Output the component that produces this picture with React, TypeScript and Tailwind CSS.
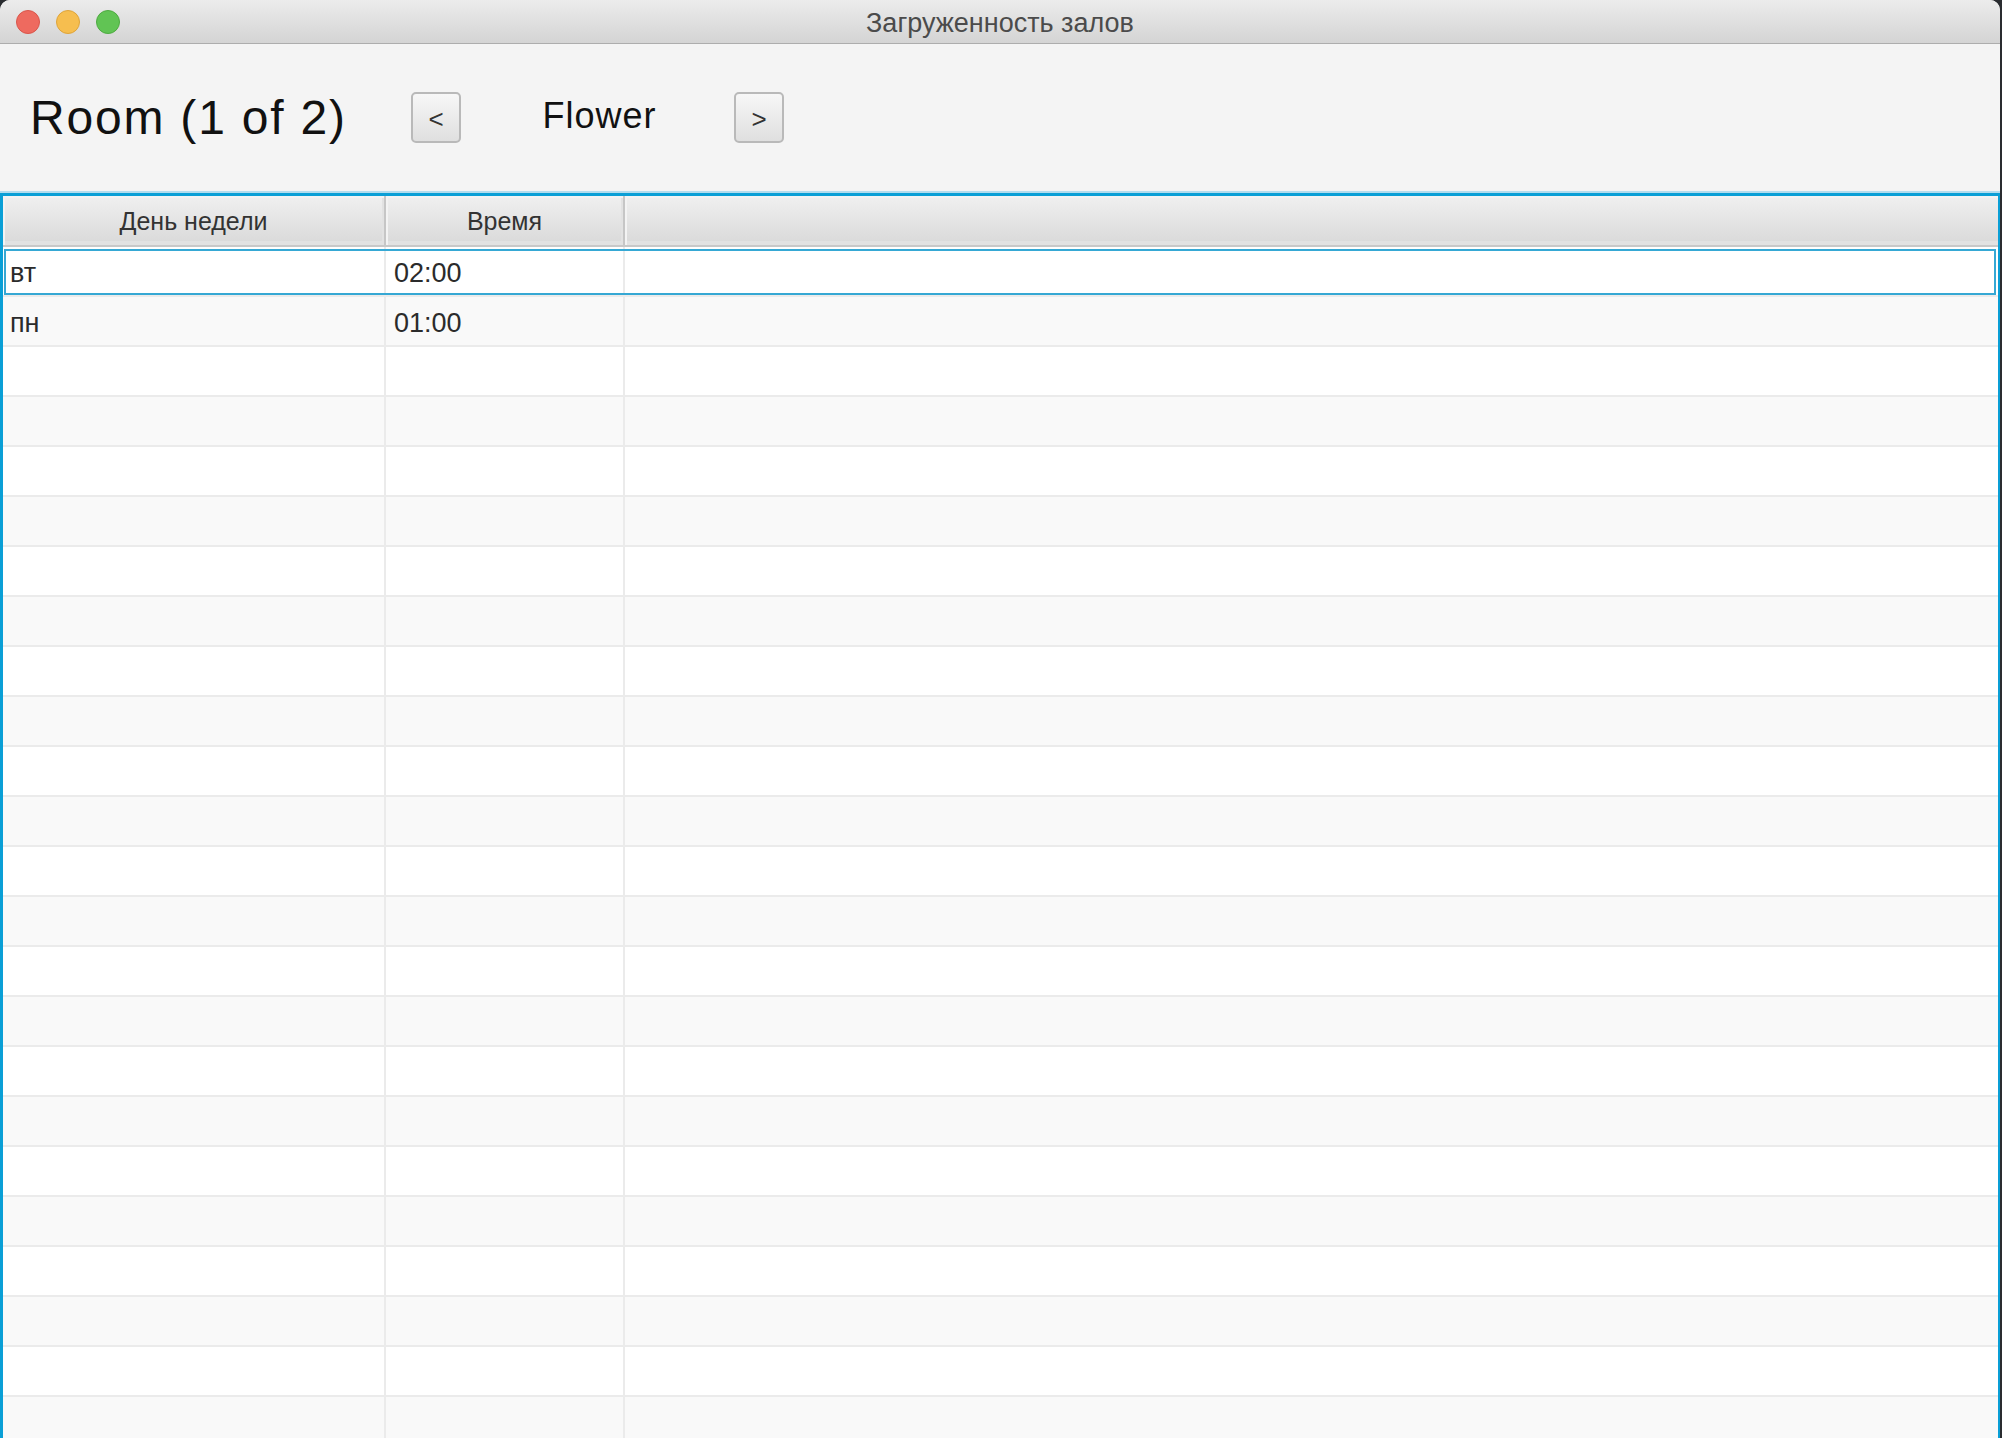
import React from "react";

const rows: { day: string; time: string }[] = [
  { day: "вт", time: "02:00" },
  { day: "пн", time: "01:00" },
];

export default function App() {
  const all = Array.from({ length: 24 }, (_, i) => rows[i] ?? { day: "", time: "" });
  return (
    <div
      className="w-[2002px] h-[1438px] bg-[#2a2c30] overflow-hidden"
      style={{ fontFamily: '"Liberation Sans", Arial, sans-serif' }}
    >
      <div className="w-[2000px] h-full flex flex-col rounded-t-[10px] overflow-hidden bg-[#f4f4f4]">
        {/* Title bar */}
        <div className="h-[44px] shrink-0 grid grid-cols-[1fr_auto_1fr] items-center border-b border-[#adadad] bg-gradient-to-b from-[#ececec] to-[#d4d4d4]">
          <div className="flex items-center gap-[16px] pl-[16px]">
            <span className="w-[24px] h-[24px] rounded-full bg-[#ee6a5f] border border-[#d9564b]" />
            <span className="w-[24px] h-[24px] rounded-full bg-[#f6be4f] border border-[#dea43a]" />
            <span className="w-[24px] h-[24px] rounded-full bg-[#61c454] border border-[#4eaa41]" />
          </div>
          <span className="text-[27px] leading-none text-[#4b4b4b] pt-[4px]">Загруженность залов</span>
          <div />
        </div>

        {/* Toolbar */}
        <div className="h-[147px] shrink-0 flex items-center pl-[30px]">
          <span className="w-[381px] text-[48px] leading-none tracking-[1.8px] text-[#111]">Room (1 of 2)</span>
          <button className="w-[50px] h-[51px] rounded-[5px] border-2 border-[#b9b9b9] bg-gradient-to-b from-[#f7f7f7] to-[#dfdfdf] text-[26px] leading-none text-[#333] flex items-center justify-center pt-[2px]">
            &lt;
          </button>
          <span className="w-[273px] pl-[4px] text-center text-[36px] leading-none tracking-[1px] text-[#111] pb-[4px]">Flower</span>
          <button className="w-[50px] h-[51px] rounded-[5px] border-2 border-[#b9b9b9] bg-gradient-to-b from-[#f7f7f7] to-[#dfdfdf] text-[26px] leading-none text-[#333] flex items-center justify-center pt-[2px]">
            &gt;
          </button>
        </div>

        {/* focus halo */}
        <div className="h-[2px] shrink-0 bg-[#b2dcee]" />

        {/* Table */}
        <div className="flex-1 flex flex-col overflow-hidden border-t-[3px] border-l-[3px] border-r-[2px] border-[#0a9fd6] bg-white">
          {/* Header */}
          <div className="h-[51px] shrink-0 flex border-b-2 border-[#c8c8c8] bg-gradient-to-b from-[#f0f0f0] to-[#d9d9d9] text-[25px] text-[#333]">
            <div className="w-[383px] shrink-0 flex items-center justify-center pt-[3px] border-r-2 border-[#c6c6c6] shadow-[inset_2px_2px_0_#f3f3f3,inset_-2px_-4px_0_#e2e2e2]">
              День недели
            </div>
            <div className="w-[239px] shrink-0 flex items-center justify-center pt-[3px] border-r-2 border-[#c6c6c6] shadow-[inset_2px_2px_0_#f3f3f3,inset_-2px_-4px_0_#e2e2e2]">
              Время
            </div>
            <div className="flex-1 shadow-[inset_2px_2px_0_#f3f3f3,inset_0_-4px_0_#e2e2e2]" />
          </div>

          {/* Rows */}
          {all.map((r, i) => (
            <div
              key={i}
              className={`relative h-[50px] shrink-0 flex border-b-2 border-[#ebebeb] text-[27px] text-[#2b2b2b] ${
                i % 2 === 0 ? "bg-white" : "bg-[#f9f9f9]"
              }`}
            >
              <div className="w-[383px] shrink-0 flex items-center pl-[7px] pt-[4px] border-r-2 border-[#ebebeb]">{r.day}</div>
              <div className="w-[239px] shrink-0 flex items-center pl-[8px] pt-[4px] border-r-2 border-[#ebebeb]">{r.time}</div>
              <div className="flex-1" />
              {i === 0 && (
                <div className="absolute left-[1px] right-[2px] top-[2px] bottom-[0px] border-2 border-[#36a8d4] pointer-events-none" />
              )}
            </div>
          ))}
        </div>
      </div>
    </div>
  );
}
